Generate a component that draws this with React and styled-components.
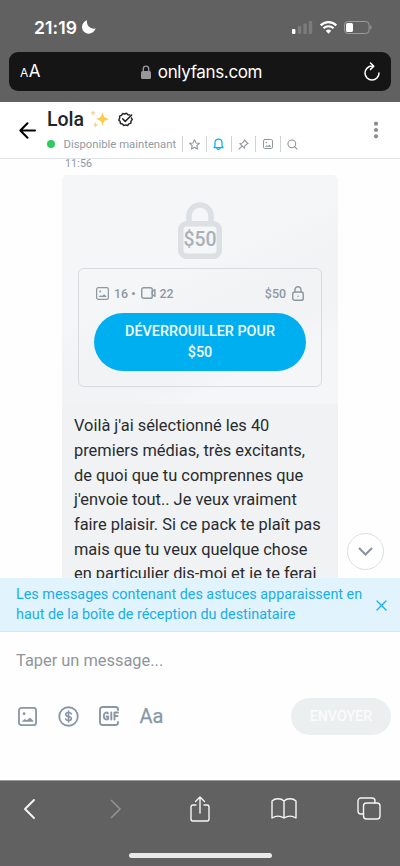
import React from "react";
import styled, { createGlobalStyle } from "styled-components";

const GlobalStyle = createGlobalStyle`
  * { box-sizing: border-box; }
  body { margin: 0; background: #fff; }
  button { border: 0; padding: 0; background: none; font: inherit; color: inherit; }
  svg { display: block; flex: none; overflow: visible; }
`;

const Screen = styled.div`
  width: 400px;
  height: 866px;
  display: flex;
  flex-direction: column;
  overflow: hidden;
  background: #fefefe;
  font-family: Roboto, sans-serif;
`;

const BrowserTop = styled.div`
  flex: none;
  height: 102px;
  background: #616161;
  font-family: Inter, sans-serif;
  color: #fff;
`;

const StatusBar = styled.div`
  height: 52px;
  padding: 2px 28px 0 34px;
  display: flex;
  align-items: center;
`;

const Clock = styled.span`
  font-size: 17.6px;
  font-weight: 600;
  letter-spacing: 0.1px;
  width: 48px;
  white-space: nowrap;
`;

const StatusIcons = styled.div`
  margin-left: auto;
  display: flex;
  align-items: center;
  gap: 7px;
`;

const AddressBar = styled.div`
  height: 39px;
  margin: 0 9px;
  padding: 0 11px;
  border-radius: 9px;
  background: #151515;
  display: grid;
  grid-template-columns: 60px 1fr 60px;
  align-items: center;
`;

const TextSize = styled.span`
  font-size: 17px;
  line-height: 20px;
  padding-top: 1px;
  small { font-size: 12px; margin-right: 0.5px; }
`;

const Domain = styled.div`
  display: flex;
  align-items: center;
  justify-content: center;
  gap: 7px;
  padding-left: 3px;
  font-size: 17px;
  letter-spacing: -0.35px;
`;

const Reload = styled.button`
  justify-self: end;
`;

const ChatHeader = styled.header`
  flex: none;
  height: 57px;
  padding-left: 19px;
  padding-right: 19px;
  display: flex;
  align-items: center;
  background: #fff;
  border-bottom: 1px solid #e3e5e6;
`;

const Identity = styled.div`
  margin-left: 11px;
  flex: 1;
  height: 56px;
  padding-top: 5px;
`;

const NameRow = styled.div`
  height: 24px;
  display: flex;
  align-items: center;
  font-size: 19.5px;
  font-weight: 500;
  color: #222426;
`;

const Name = styled.span`
  width: 43px;
`;

const VerifiedSlot = styled.span`
  margin-left: 8px;
`;

const MetaRow = styled.div`
  height: 26px;
  display: flex;
  align-items: center;
  color: #8a96a3;
`;

const OnlineDot = styled.i`
  width: 8px;
  height: 8px;
  border-radius: 50%;
  background: #2fcb60;
`;

const Availability = styled.span`
  width: 118px;
  margin-left: 8.5px;
  font-size: 11.3px;
  white-space: nowrap;
  color: #919ba3;
`;

const MetaAction = styled.span`
  width: 24.6px;
  height: 16px;
  border-left: 1px solid #cfd3d6;
  display: flex;
  align-items: center;
  justify-content: center;
  color: ${(p) => (p.$active ? "#00aff0" : "#8a9299")};
`;

const Thread = styled.main`
  flex: none;
  height: 419px;
  overflow: hidden;
  position: relative;
`;

const Timestamp = styled.div`
  height: 16px;
  padding-left: 65px;
  font-size: 10.7px;
  line-height: 14px;
  margin-top: -2px;
  letter-spacing: 0.1px;
  color: #8f979e;
`;

const Bubble = styled.article`
  width: 276px;
  margin: 2px 0 0 62px;
  border-radius: 6px 6px 0 0;
  background: #f0f2f4;
`;

const LockedMedia = styled.div`
  height: 229px;
  padding: 27px 16px 0;
  border-radius: 6px 6px 0 0;
  background: linear-gradient(155deg, #f4f6f8 0 42%, #f1f3f5 54% 72%, #f4f6f8 80%);
`;

const BigLock = styled.div`
  width: 44px;
  height: 57px;
  margin: 0 auto 9px;
  display: grid;
  grid-template-areas: "stack";
  justify-items: center;
  > * { grid-area: stack; }
`;

const LockPrice = styled.span`
  margin-top: 27px;
  font-size: 19.4px;
  line-height: 22px;
  font-weight: 500;
  color: #a9b1b7;
`;

const OfferCard = styled.div`
  height: 119px;
  padding: 15px 15px 0;
  border: 1px solid #d7dcdf;
  border-radius: 6px;
`;

const OfferInfo = styled.div`
  height: 18px;
  padding: 0 2px;
  display: flex;
  align-items: center;
  font-size: 12.4px;
  font-weight: 500;
  color: #8e98a1;
`;

const Count = styled.span`
  margin: 0 5px 0 ${(p) => p.$gap ?? 5}px;
  white-space: nowrap;
`;

const Price = styled.span`
  margin: 0 6px 0 auto;
`;

const UnlockButton = styled.button`
  width: 212px;
  height: 58px;
  margin-top: 11px;
  padding: 1px 20px 0;
  border-radius: 29px;
  background: #00aff0;
  color: #f4fcff;
  display: block;
  font-size: 14.35px;
  line-height: 20.6px;
  font-weight: 500;
`;

const MessageText = styled.p`
  margin: 0;
  padding: 10.4px 0 0 12px;
  font-size: 16.4px;
  line-height: 24.65px;
  white-space: nowrap;
  color: #292c2f;
`;

const ScrollDown = styled.button`
  position: absolute;
  right: 16px;
  bottom: 8px;
  width: 37px;
  height: 37px;
  border: 1px solid #dcdfe2;
  border-radius: 50%;
  background: #fff;
  display: grid;
  place-items: center;
`;

const TipBanner = styled.div`
  flex: none;
  height: 54px;
  padding: 7px 13px 0 16px;
  border-bottom: 1px solid #d8e9f3;
  background: #e1f3fd;
  color: #18aeea;
  display: flex;
  justify-content: space-between;
  font-size: 14.36px;
  line-height: 20.4px;
  white-space: nowrap;
`;

const TipText = styled.div`
  width: 350px;
`;

const CloseTip = styled.button`
  height: 40px;
`;

const Composer = styled.section`
  flex: none;
  height: 148px;
  padding: 17px 9px 0 16px;
  background: #fefefe;
`;

const Prompt = styled.div`
  height: 24px;
  font-size: 16.4px;
  line-height: 24px;
  color: #8f969c;
`;

const ComposerActions = styled.div`
  height: 38px;
  margin-top: 24px;
  display: flex;
  align-items: center;
  color: #8a96a3;
`;

const ToolGroup = styled.div`
  display: flex;
  align-items: center;
  gap: 20.5px;
  padding-left: 2px;
`;

const FontTool = styled.span`
  font-size: 20px;
  line-height: 22px;
  font-weight: 400;
  -webkit-text-stroke: 0.25px currentColor;
`;

const SendButton = styled.button`
  margin-left: auto;
  width: 100px;
  height: 37px;
  border-radius: 19px;
  background: #eceff0;
  color: #fafbfc;
  font-size: 14.3px;
  font-weight: 500;
`;

const BrowserBottom = styled.footer`
  flex: none;
  height: 86px;
  background: #616161;
  border-top: 1px solid #999;
  color: #f6f6f6;
`;

const BrowserNav = styled.nav`
  height: 55px;
  display: grid;
  grid-template-columns: 58px 115px 53px 116px 54px;
  align-items: center;
  justify-items: center;
`;

const HomeIndicator = styled.div`
  width: 143px;
  height: 5px;
  margin: 17px auto 0;
  border-radius: 3px;
  background: #e9e9e9;
`;

const Icon = ({ w = 24, h = w, box = "0 0 24 24", stroke = 2, children }) => (
  <svg width={w} height={h} viewBox={box} fill="none" stroke="currentColor" strokeWidth={stroke} strokeLinecap="round" strokeLinejoin="round">
    {children}
  </svg>
);

const PictureIcon = ({ size }) => (
  <Icon w={size} box="0 0 20 20" stroke={1.9}>
    <rect x="1" y="1" width="18" height="18" rx="2.5" />
    <circle cx="6.4" cy="7" r="1.5" fill="currentColor" stroke="none" />
    <path d="M4.500 15.500v-.8l2.700-2.200 2 1.500 3.300-2.700 3.500 3v1.200Z" fill="currentColor" stroke="none" />
  </Icon>
);

const statusBars = [[0, 5], [5.8, 8], [11.4, 10.5], [16.8, 13]];

export default function App() {
  return (
    <Screen>
      <GlobalStyle />
      <BrowserTop>
        <StatusBar>
          <Clock>21:19</Clock>
          <svg width="14" height="14" viewBox="0 0 14 14" fill="#fff"><path d="M5 .2C4.200 5 8 9.400 13.700 8.600 12.300 12 9.700 13.800 6.800 13.800A6.800 6.800 0 0 1 0 7C0 3.900 1.900 1.300 5 .2Z" /></svg>
          <StatusIcons>
            <svg width="21" height="13" viewBox="0 0 21 13">
              {statusBars.map(([x, h], i) => <rect key={x} x={x} y={13 - h} width="3.4" height={h} rx="1" fill={i ? "#7c7c7c" : "#fff"} />)}
            </svg>
            <svg width="17" height="13" viewBox="0 0 17 13" fill="none" stroke="#fff" strokeWidth="2.2">
              <path d="M.7 4.4a11.1 11.1 0 0 1 15.6 0M3.5 7.3a7.1 7.1 0 0 1 10 0" />
              <path d="M5.8 9.7a3.9 3.9 0 0 1 5.4 0L8.5 12.7Z" fill="#fff" stroke="none" />
            </svg>
            <svg width="28" height="13" viewBox="0 0 28 13">
              <rect x=".5" y=".5" width="24.6" height="12" rx="3.4" fill="none" stroke="#9b9b9b" />
              <rect x="2" y="2" width="7" height="9" rx="1.6" fill="#fff" />
              <path d="M26.3 4.3c1.8.8 1.8 3.6 0 4.4Z" fill="#9b9b9b" />
            </svg>
          </StatusIcons>
        </StatusBar>
        <AddressBar>
          <TextSize><small>A</small>A</TextSize>
          <Domain>
            <svg width="10" height="14" viewBox="0 0 10 14"><path d="M2.3 7V3.8a2.7 2.7 0 0 1 5.4 0V7" fill="none" stroke="#98989b" strokeWidth="1.4" /><rect y="6" width="10" height="8" rx="1.5" fill="#98989b" /></svg>
            <span>onlyfans.com</span>
          </Domain>
          <Reload aria-label="Actualiser">
            <Icon w={16} h={19} box="0 0 16 19" stroke={1.5}><path d="M9 4.100H8a7 7 0 1 0 7 7M6.500 1l3.300 3.200-3.300 3.200" /></Icon>
          </Reload>
        </AddressBar>
      </BrowserTop>

      <ChatHeader>
        <Icon w={17} h={17} box="0 0 17 17" stroke={2}><path d="M16 8.500H1.500M8.500 1.300 1.300 8.500l7.200 7.200" /></Icon>
        <Identity>
          <NameRow>
            <Name>Lola</Name>
            <svg width="20" height="20" viewBox="0 0 20 20" fill="#ffca4b">
              <path d="M12.500 2.500c.7 5 1.800 6.500 6.800 7.500-5 1-6.100 2.500-6.800 7.500-.8-5-2-6.500-6.500-7.500 4.500-1 5.700-2.500 6.500-7.500Z" />
              <path d="M3 .8c.4 2.200.8 2.700 2.600 3.200C3.800 4.500 3.400 5 3 7.200 2.600 5 2.200 4.500.4 4 2.200 3.500 2.600 3 3 .8ZM5.500 12.800c.4 2.200.8 2.700 2.700 3.200-1.900.5-2.300 1-2.700 3.200-.4-2.200-.8-2.700-2.600-3.200 1.800-.5 2.200-1 2.600-3.200Z" fill="#fbd27c" />
            </svg>
            <VerifiedSlot>
              <Icon w={15} box="0 0 24 24" stroke={2.300}>
                <path d="M21.500 9.500 22.800 12l-2 2.600-.2 3.200-3.100 1.100-2 2.600-3.200-.8-3.100 1.100-2-2.600-3.300-.7-.4-3.300L1.200 12.800l1.500-3-.1-3.300 3-1.200 1.800-2.800 3.200.7 3-1.200 2.300 2.400 3 .3" />
                <path d="m7.500 11 4 4L22 4.800" />
              </Icon>
            </VerifiedSlot>
          </NameRow>
          <MetaRow>
            <OnlineDot />
            <Availability>Disponible maintenant</Availability>
            <MetaAction><Icon w={11} stroke={2.200}><path d="m12 1.500 3.200 7 7.500.8-5.600 5 1.600 7.500-6.700-3.900-6.700 3.900L6.900 14.300l-5.600-5 7.500-.8Z" /></Icon></MetaAction>
            <MetaAction $active><Icon w={11} h={12} box="0 0 22 24" stroke={2.500}><path d="M2 19h18l-2-3V9a7 7 0 0 0-14 0v7Z" /><path d="M8 21c1 2 5 2 6 0" /></Icon></MetaAction>
            <MetaAction><Icon w={11} stroke={2.200}><path d="m14 2 8 8-3 1-4 4-1 5L4 10l5-1 4-4ZM8 16l-6 6" /></Icon></MetaAction>
            <MetaAction><PictureIcon size={10} /></MetaAction>
            <MetaAction><Icon w={11} stroke={2.200}><circle cx="10.500" cy="10.500" r="8.500" /><path d="m17 17 5 5" /></Icon></MetaAction>
          </MetaRow>
        </Identity>
        <svg width="10" height="18" viewBox="0 0 10 18" fill="#888d91"><circle cx="5" cy="2.700" r="2.100" /><circle cx="5" cy="9" r="2.100" /><circle cx="5" cy="15.300" r="2.100" /></svg>
      </ChatHeader>

      <Thread>
        <Timestamp>11:56</Timestamp>
        <Bubble>
          <LockedMedia>
            <BigLock>
              <svg width="44" height="57" viewBox="0 0 44 57" fill="none" stroke="#dce0e2" strokeWidth="5.500">
                <path d="M11 21V14a11 11 0 0 1 22 0v7" />
                <rect x="2.750" y="21.750" width="38.500" height="32.500" rx="6" />
              </svg>
              <LockPrice>$50</LockPrice>
            </BigLock>
            <OfferCard>
              <OfferInfo>
                <PictureIcon size={13} />
                <Count>16 •</Count>
                <Icon w={15} h={12} box="0 0 20 16" stroke={1.900}><rect x="1" y="1" width="14" height="14" rx="2.500" /><path d="m15 6 3.500-2.500v9L15 10Z" /></Icon>
                <Count $gap={4}>22</Count>
                <Price>$50</Price>
                <Icon w={12} h={15} box="0 0 16 20" stroke={1.900}><path d="M4 8V5a4 4 0 0 1 8 0v3" /><rect x="1" y="8" width="14" height="11" rx="2.500" /><circle cx="8" cy="13.500" r="1" fill="currentColor" stroke="none" /></Icon>
              </OfferInfo>
              <UnlockButton>DÉVERROUILLER POUR<br />$50</UnlockButton>
            </OfferCard>
          </LockedMedia>
          <MessageText>
            Voilà j'ai sélectionné les 40<br />
            premiers médias, très excitants,<br />
            de quoi que tu comprennes que<br />
            j'envoie tout.. Je veux vraiment<br />
            faire plaisir. Si ce pack te plaît pas<br />
            mais que tu veux quelque chose<br />
            en particulier dis-moi et je te ferai
          </MessageText>
        </Bubble>
        <ScrollDown aria-label="Descendre"><svg width="15" height="9" viewBox="0 0 15 9" fill="none" stroke="#88929b" strokeWidth="2"><path d="m1 1 6.500 6.500L14 1" /></svg></ScrollDown>
      </Thread>

      <TipBanner>
        <TipText>Les messages contenant des astuces apparaissent en<br />haut de la boîte de réception du destinataire</TipText>
        <CloseTip aria-label="Fermer"><Icon w={11} box="0 0 11 11" stroke={1.300}><path d="m1 1 9 9M10 1l-9 9" /></Icon></CloseTip>
      </TipBanner>

      <Composer>
        <Prompt>Taper un message...</Prompt>
        <ComposerActions>
          <ToolGroup>
            <PictureIcon size={19} />
            <Icon w={21} box="0 0 22 22" stroke={1.900}><circle cx="11" cy="11" r="9.700" /><path d="M14 8.200c-.5-1-1.600-1.400-3-1.400-3.900 0-3.900 3.500 0 4.200 4.100.7 3.900 4.200 0 4.200-1.500 0-2.600-.5-3-1.600M11 5.200v11.600" strokeWidth="1.700" /></Icon>
            <Icon w={20} box="0 0 20 20" stroke={1.900}>
              <path d="M19 4V3.500A2.500 2.500 0 0 0 16.500 1h-13A2.500 2.500 0 0 0 1 3.500v13A2.500 2.500 0 0 0 3.500 19h13a2.500 2.500 0 0 0 2.500-2.500V16" />
              <path d="M9 7.300C7.800 6 4.800 6.300 4.800 10s3 4 4.400 2.700V10.500H7.500M12.300 6.500v7M15.500 13.500v-7H19M15.500 10h3" />
            </Icon>
            <FontTool>Aa</FontTool>
          </ToolGroup>
          <SendButton>ENVOYER</SendButton>
        </ComposerActions>
      </Composer>

      <BrowserBottom>
        <BrowserNav>
          <Icon w={12} h={20} box="0 0 12 20" stroke={1.900}><path d="m11 1-9 9 9 9" /></Icon>
          <svg width="12" height="20" viewBox="0 0 12 20" fill="none" stroke="#929292" strokeWidth="1.600"><path d="m1 1 9 9-9 9" /></svg>
          <Icon w={20} h={26} box="0 0 20 26" stroke={1.400}><path d="M6 9H3a2 2 0 0 0-2 2v12a2 2 0 0 0 2 2h14a2 2 0 0 0 2-2V11a2 2 0 0 0-2-2h-3M10 17V1M5.500 5.500 10 1l4.500 4.500" /></Icon>
          <Icon w={26} h={21} box="0 0 26 21" stroke={1.400}><path d="M13 3C10 0 4 0 1 3V20c4-2.500 8-2.500 12 0 4-2.500 8-2.500 12 0V3C22 0 16 0 13 3Zm0 0v17" /></Icon>
          <Icon w={24} h={23} box="0 0 24 23" stroke={1.400}><rect x="6.500" y="6" width="16.500" height="16" rx="3" /><path d="M6.500 17H4a3 3 0 0 1-3-3V4a3 3 0 0 1 3-3h11a3 3 0 0 1 3 3v2" /></Icon>
        </BrowserNav>
        <HomeIndicator />
      </BrowserBottom>
    </Screen>
  );
}
